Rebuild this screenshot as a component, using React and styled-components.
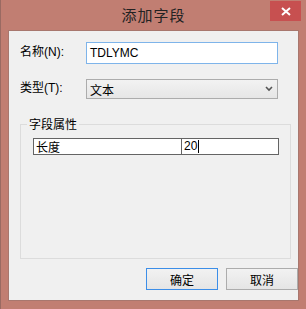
import React from 'react';
import styled, { createGlobalStyle } from 'styled-components';

const Global = createGlobalStyle`
	body {
		margin: 0;
		background: #7a7a7a;
		font-family: "Noto Sans CJK SC", "Noto Sans", sans-serif;
	}
`;

const Window = styled.div`
	width: 306px;
	height: 309px;
	box-sizing: border-box;
	background: #c17e72;
	display: flex;
	flex-direction: column;
	border-left: 1px solid #9a6a62;
`;

const TitleBar = styled.div`
	height: 30px;
	display: grid;
	grid-template-columns: 1fr auto 1fr;
	align-items: start;
`;

const Title = styled.div`
	grid-column: 2;
	font-size: 15px;
	line-height: 30px;
	color: #222;
	letter-spacing: 1px;
`;

const Close = styled.div`
	grid-column: 3;
	justify-self: end;
	margin: 1px 5px 0 0;
	width: 31px;
	height: 20px;
	background: #c75050;
	display: flex;
	align-items: center;
	justify-content: center;
`;

const Client = styled.div`
	margin: 0 7px 8px 7px;
	height: 271px;
	box-sizing: border-box;
	background: #f0f0f0;
	border: 1px solid #a8776e;
	padding: 11px 0 0 11px;
	display: flex;
	flex-direction: column;
`;

const Row = styled.div`
	display: flex;
	align-items: flex-start;
	margin-bottom: ${p => p.gap}px;
`;

const Label = styled.div`
	width: 66px;
	font-size: 12px;
	line-height: 16px;
	color: #000;
	padding-top: ${p => p.top}px;
	span {
		font-family: "Liberation Sans", sans-serif;
	}
`;

const TextBox = styled.div`
	width: 192px;
	height: 22px;
	box-sizing: border-box;
	background: #fff;
	border: 1px solid #7eb4ea;
	font-family: "Liberation Sans", sans-serif;
	font-size: 12px;
	line-height: 20px;
	padding-left: 3px;
	color: #000;
`;

const Select = styled.div`
	width: 192px;
	height: 20px;
	box-sizing: border-box;
	border: 1px solid #acacac;
	background: linear-gradient(#f2f2f2, #e6e6e6);
	display: flex;
	align-items: center;
	justify-content: space-between;
	padding: 0 4px 0 3px;
	font-size: 12px;
	color: #000;
`;

const Group = styled.fieldset`
	margin: 0;
	width: 271px;
	height: 142px;
	box-sizing: border-box;
	border: 1px solid #dcdcdc;
	padding: 7px 0 0 0;
	legend {
		font-size: 12px;
		line-height: 14px;
		padding: 0 2px;
		margin-left: 6px;
		color: #000;
	}
`;

const Table = styled.div`
	width: 246px;
	height: 17px;
	margin-left: 12px;
	box-sizing: border-box;
	border: 1px solid #646464;
	display: grid;
	grid-template-columns: 147px 1fr;
	background: #fff;
`;

const Cell = styled.div`
	font-size: 12px;
	line-height: 15px;
	padding-left: 2px;
	color: #000;
	border-left: ${p => (p.first ? 'none' : '1px solid #646464')};
	display: flex;
	align-items: center;
	font-family: ${p => (p.num ? '"Liberation Sans", sans-serif' : 'inherit')};
`;

const Caret = styled.span`
	width: 1px;
	height: 13px;
	background: #000;
	margin-left: 1px;
`;

const Buttons = styled.div`
	display: flex;
	gap: 8px;
	margin: 9px 0 0 126px;
`;

const Button = styled.div`
	width: 74px;
	height: 22px;
	box-sizing: border-box;
	border: 1px solid ${p => (p.primary ? '#3c8ee8' : '#acacac')};
	background: linear-gradient(#f2f2f2, #e5e5e5);
	display: flex;
	align-items: center;
	justify-content: center;
	font-size: 12px;
	color: #000;
`;

export default function App() {
	return (
		<>
			<Global />
			<Window>
				<TitleBar>
					<Title>添加字段</Title>
					<Close>
						<svg width="10" height="9" viewBox="0 0 10 9">
							<path d="M1 1 L9 8 M9 1 L1 8" stroke="#fff" strokeWidth="2" />
						</svg>
					</Close>
				</TitleBar>
				<Client>
					<Row gap={15}>
						<Label top={1}>名称<span>(N):</span></Label>
						<TextBox>TDLYMC</TextBox>
					</Row>
					<Row gap={18}>
						<Label top={0}>类型<span>(T):</span></Label>
						<Select>
							<span>文本</span>
							<svg width="8" height="6" viewBox="0 0 8 6">
								<path d="M1 1 L4 4 L7 1" stroke="#555" strokeWidth="1.6" fill="none" />
							</svg>
						</Select>
					</Row>
					<Group>
						<legend>字段属性</legend>
						<Table>
							<Cell first>长度</Cell>
							<Cell num>20<Caret /></Cell>
						</Table>
					</Group>
					<Buttons>
						<Button primary>确定</Button>
						<Button>取消</Button>
					</Buttons>
				</Client>
			</Window>
		</>
	);
}
